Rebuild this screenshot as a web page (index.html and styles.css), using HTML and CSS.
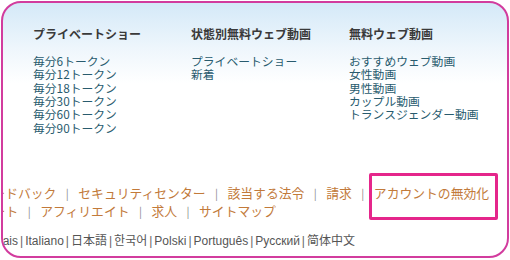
FILE: index.html
```html
<!DOCTYPE html>
<html lang="ja">
<head>
<meta charset="utf-8">
<title>Footer</title>
<link rel="stylesheet" href="styles.css">
</head>
<body>
<div class="frame">
  <div class="cols">
    <div class="col">
      <div class="col-title">プライベートショー</div>
      <ul class="col-list">
        <li><a href="#">毎分6トークン</a></li>
        <li><a href="#">毎分12トークン</a></li>
        <li><a href="#">毎分18トークン</a></li>
        <li><a href="#">毎分30トークン</a></li>
        <li><a href="#">毎分60トークン</a></li>
        <li><a href="#">毎分90トークン</a></li>
      </ul>
    </div>
    <div class="col">
      <div class="col-title">状態別無料ウェブ動画</div>
      <ul class="col-list">
        <li><a href="#">プライベートショー</a></li>
        <li><a href="#">新着</a></li>
      </ul>
    </div>
    <div class="col">
      <div class="col-title">無料ウェブ動画</div>
      <ul class="col-list">
        <li><a href="#">おすすめウェブ動画</a></li>
        <li><a href="#">女性動画</a></li>
        <li><a href="#">男性動画</a></li>
        <li><a href="#">カップル動画</a></li>
        <li><a href="#">トランスジェンダー動画</a></li>
      </ul>
    </div>
  </div>
  <div class="links">
    <div class="links-row">
      <a href="#">フィードバック</a><span class="sep">|</span>
      <a href="#">セキュリティセンター</a><span class="sep">|</span>
      <a href="#">該当する法令</a><span class="sep">|</span>
      <a href="#">請求</a><span class="sep">|</span>
      <a href="#" class="highlight">アカウントの無効化</a>
    </div>
    <div class="links-row">
      <a href="#">サポート</a><span class="sep">|</span>
      <a href="#">アフィリエイト</a><span class="sep">|</span>
      <a href="#">求人</a><span class="sep">|</span>
      <a href="#">サイトマップ</a>
    </div>
  </div>
  <div class="langs">
    <a href="#">Français</a><span class="lsep">|</span><a href="#">Italiano</a><span class="lsep">|</span><a href="#">日本語</a><span class="lsep">|</span><a href="#">한국어</a><span class="lsep">|</span><a href="#">Polski</a><span class="lsep">|</span><a href="#">Português</a><span class="lsep">|</span><a href="#">Русский</a><span class="lsep">|</span><a href="#">简体中文</a>
  </div>
</div>
</body>
</html>
```
FILE: styles.css
```css
html, body {
  margin: 0;
  padding: 0;
  background: #ffffff;
}
body {
  font-family: "Noto Sans CJK JP", "Noto Sans", sans-serif;
}
a {
  text-decoration: none;
  color: inherit;
}
.frame {
  margin: 1px;
  height: 257px;
  box-sizing: border-box;
  border: 2px solid #d23c9e;
  border-radius: 20px;
  overflow: hidden;
  background: linear-gradient(180deg, #d4e9f8 0px, #eef6fc 45px, #ffffff 80px);
}
.cols {
  display: flex;
  padding: 22px 0 0 30px;
}
.col {
  width: 158px;
  flex: none;
}
.col-title {
  font-size: 12px;
  line-height: 18px;
  font-weight: 700;
  color: #3a3a3a;
  margin-bottom: 11px;
  white-space: nowrap;
}
.col-list {
  list-style: none;
  margin: 0;
  padding: 0;
  font-size: 11.8px;
  line-height: 13.33px;
  color: #285b6e;
  white-space: nowrap;
}
.links {
  margin-top: 50px;
  margin-left: -36px;
  font-size: 12.8px;
  line-height: 18px;
  color: #c27a3a;
}
.links-row {
  display: flex;
  white-space: nowrap;
}
.sep {
  color: #8a8a8a;
  font-size: 11px;
  margin: 0 9.5px;
}
.highlight {
  position: relative;
}
.highlight::after {
  content: "";
  position: absolute;
  left: -5px;
  right: -9px;
  top: -11px;
  bottom: -18px;
  border: 3px solid #e5268b;
  border-radius: 2px;
}
.langs {
  margin-top: 12px;
  margin-left: -31px;
  font-family: "Liberation Sans", "Noto Sans CJK JP", sans-serif;
  font-size: 12px;
  line-height: 18px;
  color: #555555;
  white-space: nowrap;
}
.lsep {
  margin: 0 2px;
  color: #666666;
}
```
